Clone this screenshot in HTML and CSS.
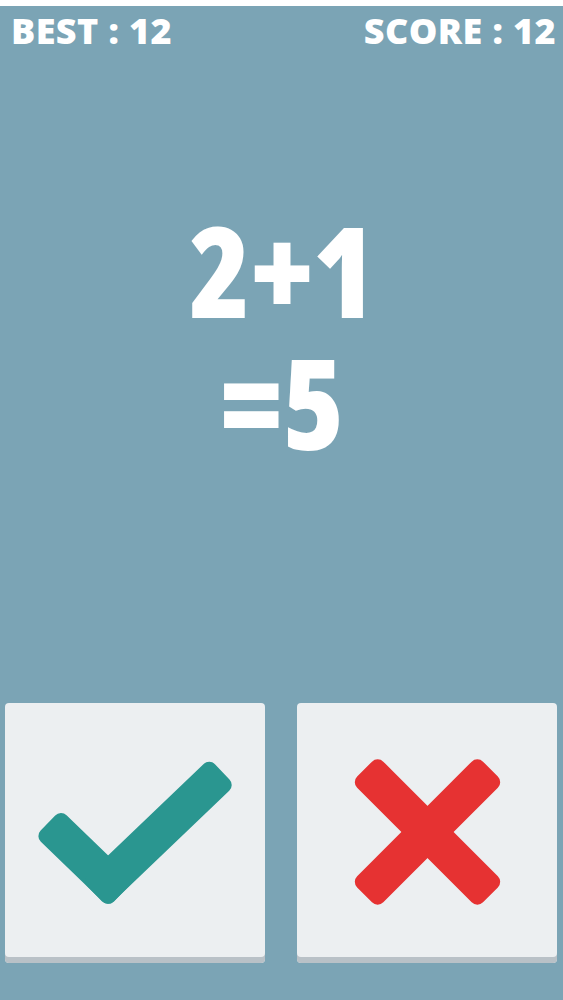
FILE: index.html
```html
<!DOCTYPE html>
<html lang="en">
<head>
<meta charset="utf-8">
<title>Quick Math</title>
<link rel="stylesheet" href="styles.css">
</head>
<body>
<div class="screen">
  <div class="status-strip"></div>
  <header class="scorebar">
    <span class="best">BEST : 12</span>
    <span class="score">SCORE : 12</span>
  </header>
  <main class="equation">
    <div class="line">2+1</div>
    <div class="line">=5</div>
  </main>
  <div class="answers">
    <button class="card" type="button" aria-label="True">
      <svg class="icon" viewBox="0 0 260 254" width="260" height="254">
        <g fill="#2a9690">
          <g transform="translate(103 178) rotate(-136)"><rect x="-18.5" y="-18.5" width="102" height="37" rx="8"/></g>
          <g transform="translate(103 178) rotate(-43.7)"><rect x="-18.5" y="-18.5" width="176.5" height="37" rx="8"/></g>
        </g>
      </svg>
    </button>
    <button class="card" type="button" aria-label="False">
      <svg class="icon" viewBox="0 0 260 254" width="260" height="254">
        <g fill="#e63232">
          <g transform="translate(130.5 129) rotate(45)"><rect x="-89" y="-18.5" width="178" height="37" rx="8"/></g>
          <g transform="translate(130.5 129) rotate(-45)"><rect x="-89" y="-18.5" width="178" height="37" rx="8"/></g>
        </g>
      </svg>
    </button>
  </div>
</div>
</body>
</html>
```

FILE: styles.css
```css
* {
  box-sizing: border-box;
}

html, body {
  margin: 0;
  padding: 0;
}

body {
  background: #7ba4b5;
  font-family: "Open Sans", "DejaVu Sans", sans-serif;
  color: #fff;
}

.screen {
  width: 563px;
  height: 1000px;
  display: flex;
  flex-direction: column;
  overflow: hidden;
}

.status-strip {
  height: 6px;
  background: #ffffff;
}

.scorebar {
  display: flex;
  justify-content: space-between;
  align-items: flex-start;
  padding: 7px 7px 0 11px;
  height: 54px;
  font-weight: 800;
  font-size: 36px;
  line-height: 36px;
  letter-spacing: 0.4px;
}

.equation {
  margin-top: 143px;
  text-align: center;
  font-weight: 800;
  font-size: 126px;
  font-stretch: 87.5%;
  letter-spacing: -1px;
}

.line {
  height: 132px;
  line-height: 132px;
}

.answers {
  margin-top: auto;
  display: flex;
  gap: 32px;
  padding: 0 6px 37px 5px;
}

.card {
  width: 260px;
  height: 260px;
  padding: 0 0 6px 0;
  border: none;
  border-radius: 4px;
  background: #eceff1;
  box-shadow: inset 0 -6px 0 #b9c1c7;
  display: block;
  cursor: pointer;
}

.icon {
  display: block;
}
```
